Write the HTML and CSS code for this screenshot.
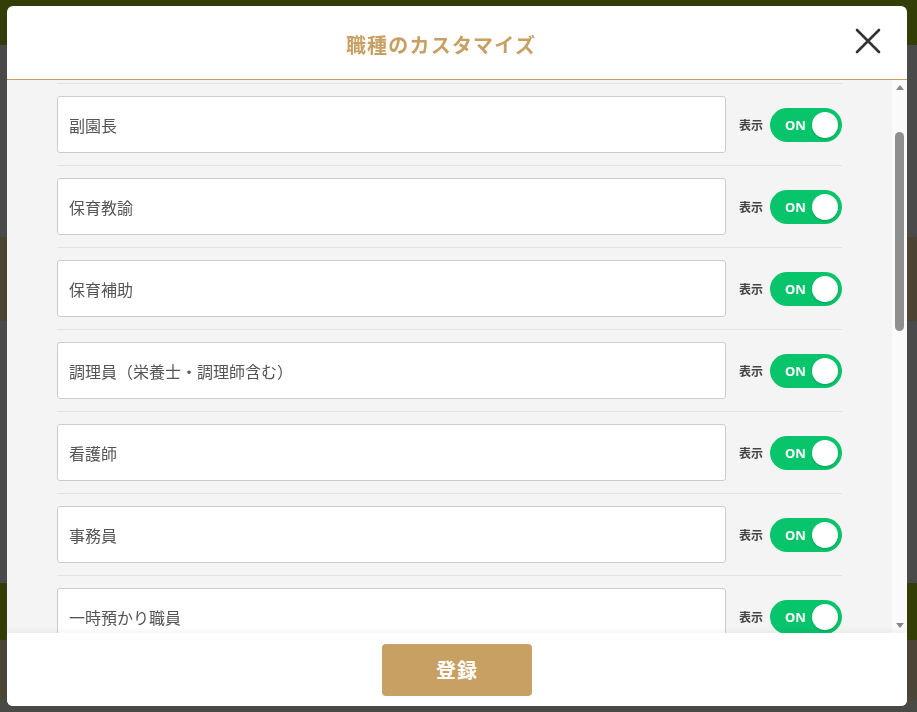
FILE: index.html
```html
<!DOCTYPE html>
<html lang="ja">
<head>
    <meta charset="UTF-8">
    <meta name="viewport" content="width=device-width, initial-scale=1.0">
    <title>職種のカスタマイズ</title>
    <link rel="stylesheet" href="styles.css">
</head>
<body>
    <!-- Page behind the dialog -->
    <div class="page">
        <div class="page-header"></div>
        <div class="page-main">
            <div class="page-strip"></div>
        </div>
        <div class="page-band"></div>
        <div class="page-footer"></div>
    </div>

    <!-- Dialog -->
    <div class="overlay">
        <div class="modal">
            <div class="modal-header">
                <h2 class="modal-title">職種のカスタマイズ</h2>
                <button type="button" class="close-btn" aria-label="閉じる">
                    <svg width="26" height="26" viewBox="0 0 26 26">
                        <path d="M2 2 L24 24 M24 2 L2 24" stroke="#333" stroke-width="2.6" stroke-linecap="round" fill="none"/>
                    </svg>
                </button>
            </div>

            <div class="modal-body">
                <div class="list-scroll" id="jobList">
                    <ul class="job-list">
                        <li class="job-row">
                            <input type="text" class="job-input" value="園長">
                            <span class="show-label">表示</span>
                            <label class="toggle"><input type="checkbox" checked><span class="toggle-track"><span class="toggle-text">ON</span><span class="toggle-knob"></span></span></label>
                        </li>
                        <li class="job-row">
                            <input type="text" class="job-input" value="副園長">
                            <span class="show-label">表示</span>
                            <label class="toggle"><input type="checkbox" checked><span class="toggle-track"><span class="toggle-text">ON</span><span class="toggle-knob"></span></span></label>
                        </li>
                        <li class="job-row">
                            <input type="text" class="job-input" value="保育教諭">
                            <span class="show-label">表示</span>
                            <label class="toggle"><input type="checkbox" checked><span class="toggle-track"><span class="toggle-text">ON</span><span class="toggle-knob"></span></span></label>
                        </li>
                        <li class="job-row">
                            <input type="text" class="job-input" value="保育補助">
                            <span class="show-label">表示</span>
                            <label class="toggle"><input type="checkbox" checked><span class="toggle-track"><span class="toggle-text">ON</span><span class="toggle-knob"></span></span></label>
                        </li>
                        <li class="job-row">
                            <input type="text" class="job-input" value="調理員（栄養士・調理師含む）">
                            <span class="show-label">表示</span>
                            <label class="toggle"><input type="checkbox" checked><span class="toggle-track"><span class="toggle-text">ON</span><span class="toggle-knob"></span></span></label>
                        </li>
                        <li class="job-row">
                            <input type="text" class="job-input" value="看護師">
                            <span class="show-label">表示</span>
                            <label class="toggle"><input type="checkbox" checked><span class="toggle-track"><span class="toggle-text">ON</span><span class="toggle-knob"></span></span></label>
                        </li>
                        <li class="job-row">
                            <input type="text" class="job-input" value="事務員">
                            <span class="show-label">表示</span>
                            <label class="toggle"><input type="checkbox" checked><span class="toggle-track"><span class="toggle-text">ON</span><span class="toggle-knob"></span></span></label>
                        </li>
                        <li class="job-row">
                            <input type="text" class="job-input" value="一時預かり職員">
                            <span class="show-label">表示</span>
                            <label class="toggle"><input type="checkbox" checked><span class="toggle-track"><span class="toggle-text">ON</span><span class="toggle-knob"></span></span></label>
                        </li>
                        <li class="job-row">
                            <input type="text" class="job-input" value="子育て支援員">
                            <span class="show-label">表示</span>
                            <label class="toggle"><input type="checkbox" checked><span class="toggle-track"><span class="toggle-text">ON</span><span class="toggle-knob"></span></span></label>
                        </li>
                        <li class="job-row">
                            <input type="text" class="job-input" value="用務員">
                            <span class="show-label">表示</span>
                            <label class="toggle"><input type="checkbox" checked><span class="toggle-track"><span class="toggle-text">ON</span><span class="toggle-knob"></span></span></label>
                        </li>
                        <li class="job-row">
                            <input type="text" class="job-input" value="運転手">
                            <span class="show-label">表示</span>
                            <label class="toggle"><input type="checkbox" checked><span class="toggle-track"><span class="toggle-text">ON</span><span class="toggle-knob"></span></span></label>
                        </li>
                        <li class="job-row">
                            <input type="text" class="job-input" value="嘱託医">
                            <span class="show-label">表示</span>
                            <label class="toggle"><input type="checkbox" checked><span class="toggle-track"><span class="toggle-text">ON</span><span class="toggle-knob"></span></span></label>
                        </li>
                        <li class="job-row">
                            <input type="text" class="job-input" value="主幹保育教諭">
                            <span class="show-label">表示</span>
                            <label class="toggle"><input type="checkbox" checked><span class="toggle-track"><span class="toggle-text">ON</span><span class="toggle-knob"></span></span></label>
                        </li>
                        <li class="job-row">
                            <input type="text" class="job-input" value="指導保育教諭">
                            <span class="show-label">表示</span>
                            <label class="toggle"><input type="checkbox" checked><span class="toggle-track"><span class="toggle-text">ON</span><span class="toggle-knob"></span></span></label>
                        </li>
                        <li class="job-row">
                            <input type="text" class="job-input" value="保育士">
                            <span class="show-label">表示</span>
                            <label class="toggle"><input type="checkbox" checked><span class="toggle-track"><span class="toggle-text">ON</span><span class="toggle-knob"></span></span></label>
                        </li>
                        <li class="job-row">
                            <input type="text" class="job-input" value="幼稚園教諭">
                            <span class="show-label">表示</span>
                            <label class="toggle"><input type="checkbox" checked><span class="toggle-track"><span class="toggle-text">ON</span><span class="toggle-knob"></span></span></label>
                        </li>
                        <li class="job-row">
                            <input type="text" class="job-input" value="その他">
                            <span class="show-label">表示</span>
                            <label class="toggle"><input type="checkbox" checked><span class="toggle-track"><span class="toggle-text">ON</span><span class="toggle-knob"></span></span></label>
                        </li>
                    </ul>
                </div>

                <!-- scrollbar rail -->
                <div class="scrollbar">
                    <span class="scroll-arrow up"></span>
                    <div class="scroll-track">
                        <div class="scroll-thumb" id="scrollThumb"></div>
                    </div>
                    <span class="scroll-arrow down"></span>
                </div>
            </div>

            <div class="modal-footer">
                <button type="button" class="submit-btn">登録</button>
            </div>
        </div>
    </div>

    <script src="script.js"></script>
</body>
</html>
```

FILE: styles.css
```css
* {
    margin: 0;
    padding: 0;
    box-sizing: border-box;
}

html, body {
    width: 100%;
    height: 100%;
    overflow: hidden;
    font-family: "Noto Sans CJK JP", "Noto Sans", sans-serif;
}

body {
    background: #494946;
}

/* Page (dimmed behind the dialog) */
.page {
    display: flex;
    flex-direction: column;
    height: 100%;
}

.page-header {
    height: 45px;
    background: #333d06;
}

.page-main {
    height: 538px;
    background: #4a4a4a;
    padding-top: 192px;
}

.page-strip {
    height: 84px;
    background: #4d4333;
}

.page-band {
    height: 57px;
    background: #333d06;
}

.page-footer {
    height: 60px;
    background: #4a4537;
}

/* Overlay + dialog */
.overlay {
    position: fixed;
    top: 0;
    left: 0;
    right: 0;
    bottom: 0;
    display: flex;
    align-items: center;
    padding-left: 7px;
}

.modal {
    width: 900px;
    height: 700px;
    background: #fff;
    border-radius: 6px;
    display: flex;
    flex-direction: column;
    overflow: hidden;
}

.modal-header {
    height: 74px;
    flex-shrink: 0;
    display: flex;
    align-items: center;
    padding: 0 23px;
    border-bottom: 1px solid #c9a063;
}

.modal-title {
    flex: 1;
    text-align: center;
    color: #c9a063;
    font-size: 20px;
    font-weight: 700;
    letter-spacing: 1.2px;
    padding-top: 4px;
}

.close-btn {
    width: 32px;
    height: 32px;
    background: none;
    border: none;
    cursor: pointer;
    display: flex;
    align-items: center;
    justify-content: center;
    margin-top: -4px;
}

/* Scrolling list */
.modal-body {
    flex: 1;
    min-height: 0;
    display: flex;
    background: #f4f4f4;
}

.list-scroll {
    flex: 1;
    overflow-y: auto;
    scrollbar-width: none;
}

.scrollbar {
    width: 15px;
    flex-shrink: 0;
    display: flex;
    flex-direction: column;
    align-items: center;
    background: #fafafa;
}

.scroll-arrow {
    width: 15px;
    height: 15px;
    display: flex;
    align-items: center;
    justify-content: center;
}

.scroll-arrow::before {
    content: "";
    border-left: 4px solid transparent;
    border-right: 4px solid transparent;
}

.scroll-arrow.up::before {
    border-bottom: 5px solid #888;
}

.scroll-arrow.down::before {
    border-top: 5px solid #888;
}

.scroll-track {
    flex: 1;
    width: 9px;
}

.scroll-thumb {
    width: 9px;
    height: 198px;
    margin-top: 38px;
    border-radius: 5px;
    background: #8f8f8f;
}

.job-list {
    list-style: none;
    padding: 24px 50px 36px 50px;
}

.job-row {
    display: flex;
    align-items: center;
    padding: 12px 0;
    border-bottom: 1px solid #e2e2e2;
}

.job-input {
    flex: 1;
    height: 57px;
    padding: 0 11px;
    font-family: "Noto Sans CJK JP", "Noto Sans", sans-serif;
    font-size: 16px;
    color: #555;
    background: #fff;
    border: 1px solid #ccc;
    border-radius: 3px;
}

.job-input:focus {
    outline: none;
    border-color: #c9a063;
}

.show-label {
    margin-left: 13px;
    margin-right: 7px;
    font-size: 12px;
    font-weight: 700;
    color: #444;
}

/* ON/OFF switch */
.toggle {
    cursor: pointer;
}

.toggle input {
    display: none;
}

.toggle-track {
    position: relative;
    display: flex;
    align-items: center;
    width: 72px;
    height: 34px;
    border-radius: 17px;
    background: #08c46b;
    padding-left: 15px;
}

.toggle-text {
    color: #fff;
    font-family: "Noto Sans", sans-serif;
    font-size: 13px;
    font-weight: 700;
}

.toggle-knob {
    position: absolute;
    top: 4px;
    right: 4px;
    width: 26px;
    height: 26px;
    border-radius: 50%;
    background: #fff;
    box-shadow: 0 1px 2px rgba(0, 0, 0, 0.2);
}

.toggle input:not(:checked) + .toggle-track {
    background: #bbb;
}

/* Footer */
.modal-footer {
    height: 73px;
    flex-shrink: 0;
    display: flex;
    align-items: center;
    justify-content: center;
    background: #fff;
    box-shadow: 0 -3px 5px rgba(0, 0, 0, 0.04);
    position: relative;
}

.submit-btn {
    width: 150px;
    height: 52px;
    background: #c9a063;
    border: none;
    border-radius: 4px;
    color: #fff;
    font-family: "Noto Sans CJK JP", "Noto Sans", sans-serif;
    font-size: 20px;
    font-weight: 700;
    letter-spacing: 1px;
    cursor: pointer;
}

.submit-btn:hover {
    background: #b98f52;
}
```

FILE: script.js
```js
const list = document.getElementById('jobList');
const thumb = document.getElementById('scrollThumb');

function syncThumb() {
    const track = thumb.parentElement.clientHeight;
    const size = Math.max(20, track * list.clientHeight / list.scrollHeight);
    const room = list.scrollHeight - list.clientHeight;
    thumb.style.height = size + 'px';
    thumb.style.marginTop = (room > 0 ? (track - size) * list.scrollTop / room : 0) + 'px';
}

list.addEventListener('scroll', syncThumb);
list.scrollTop = 102;
syncThumb();
```
